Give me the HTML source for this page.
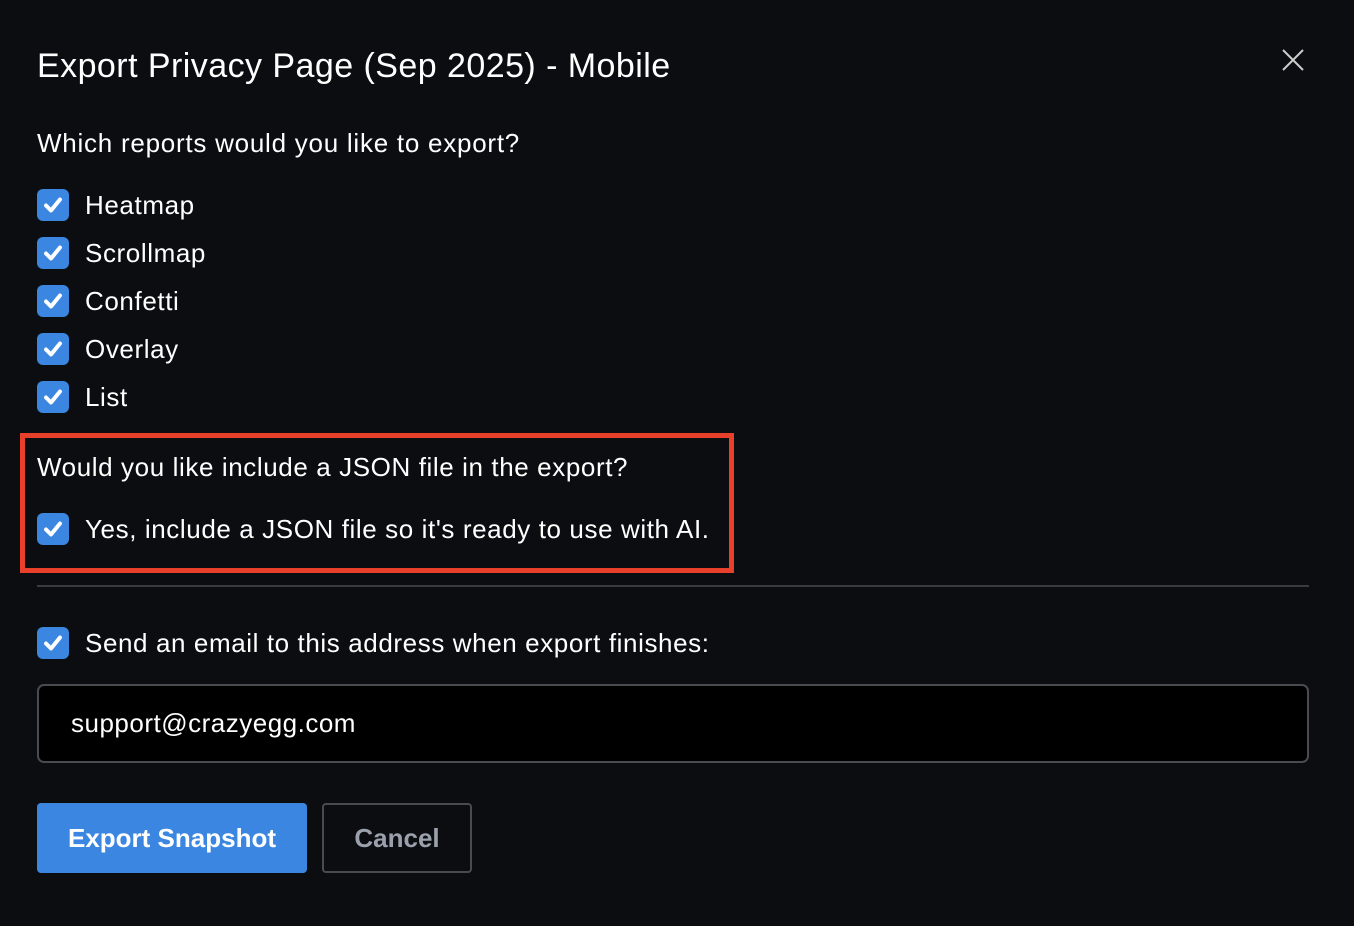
<!DOCTYPE html>
<html><head><style>
body{margin:0;width:1354px;height:926px;background:#0c0d10;font-family:"Liberation Sans",sans-serif;color:#fff;position:relative;overflow:hidden}
.a{position:absolute;white-space:nowrap}
.t{letter-spacing:0.6px}
.cb{position:absolute;left:37px;width:32px;height:32px;background:#3b86e0;border-radius:6px}
.cb svg{position:absolute;left:0;top:0}
.l{position:absolute;left:85px;font-size:26px;line-height:32px;letter-spacing:0.6px;white-space:nowrap}
</style></head><body>
<div class="a" style="left:37px;top:44px;font-size:34px;line-height:44px;letter-spacing:0.45px">Export Privacy Page (Sep 2025) - Mobile</div>
<svg class="a" style="left:1281px;top:48px" width="24" height="24"><path d="M2 2L22 22M22 2L2 22" stroke="#ccc" stroke-width="2"/></svg>
<div class="a t" style="left:37px;top:127px;font-size:26px;line-height:32px;letter-spacing:0.75px">Which reports would you like to export?</div>

<div class="cb" style="top:189px"><svg width="32" height="32"><path d="M9 16.5l5 5 9-11" stroke="#fff" stroke-width="4" fill="none" stroke-linecap="round" stroke-linejoin="round"/></svg></div><div class="l" style="top:189px">Heatmap</div>
<div class="cb" style="top:237px"><svg width="32" height="32"><path d="M9 16.5l5 5 9-11" stroke="#fff" stroke-width="4" fill="none" stroke-linecap="round" stroke-linejoin="round"/></svg></div><div class="l" style="top:237px">Scrollmap</div>
<div class="cb" style="top:285px"><svg width="32" height="32"><path d="M9 16.5l5 5 9-11" stroke="#fff" stroke-width="4" fill="none" stroke-linecap="round" stroke-linejoin="round"/></svg></div><div class="l" style="top:285px">Confetti</div>
<div class="cb" style="top:333px"><svg width="32" height="32"><path d="M9 16.5l5 5 9-11" stroke="#fff" stroke-width="4" fill="none" stroke-linecap="round" stroke-linejoin="round"/></svg></div><div class="l" style="top:333px">Overlay</div>
<div class="cb" style="top:381px"><svg width="32" height="32"><path d="M9 16.5l5 5 9-11" stroke="#fff" stroke-width="4" fill="none" stroke-linecap="round" stroke-linejoin="round"/></svg></div><div class="l" style="top:381px">List</div>

<div class="a" style="left:20px;top:433px;width:704px;height:130px;border:5px solid #e8402a"></div>
<div class="a t" style="left:37px;top:451px;font-size:26px;line-height:32px">Would you like include a JSON file in the export?</div>
<div class="cb" style="top:513px"><svg width="32" height="32"><path d="M9 16.5l5 5 9-11" stroke="#fff" stroke-width="4" fill="none" stroke-linecap="round" stroke-linejoin="round"/></svg></div><div class="l" style="top:513px">Yes, include a JSON file so it's ready to use with AI.</div>

<div class="a" style="left:37px;top:585px;width:1272px;height:2px;background:#3a3b3f"></div>
<div class="cb" style="top:627px"><svg width="32" height="32"><path d="M9 16.5l5 5 9-11" stroke="#fff" stroke-width="4" fill="none" stroke-linecap="round" stroke-linejoin="round"/></svg></div><div class="l" style="top:627px">Send an email to this address when export finishes:</div>

<div class="a" style="left:37px;top:684px;width:1268px;height:75px;border:2px solid #4a4b50;border-radius:7px;background:#000"></div>
<div class="a" style="left:71px;top:706px;font-size:26px;line-height:34px;letter-spacing:0.5px">support@crazyegg.com</div>

<div class="a" style="left:37px;top:803px;width:270px;height:70px;background:#3b86e0;border-radius:4px;font-size:26px;font-weight:bold;line-height:70px;text-align:center">Export Snapshot</div>
<div class="a" style="left:322px;top:803px;width:146px;height:66px;border:2px solid #4a4b50;border-radius:4px;font-size:26px;font-weight:bold;line-height:66px;text-align:center;color:#9aa0ac">Cancel</div>
</body></html>
